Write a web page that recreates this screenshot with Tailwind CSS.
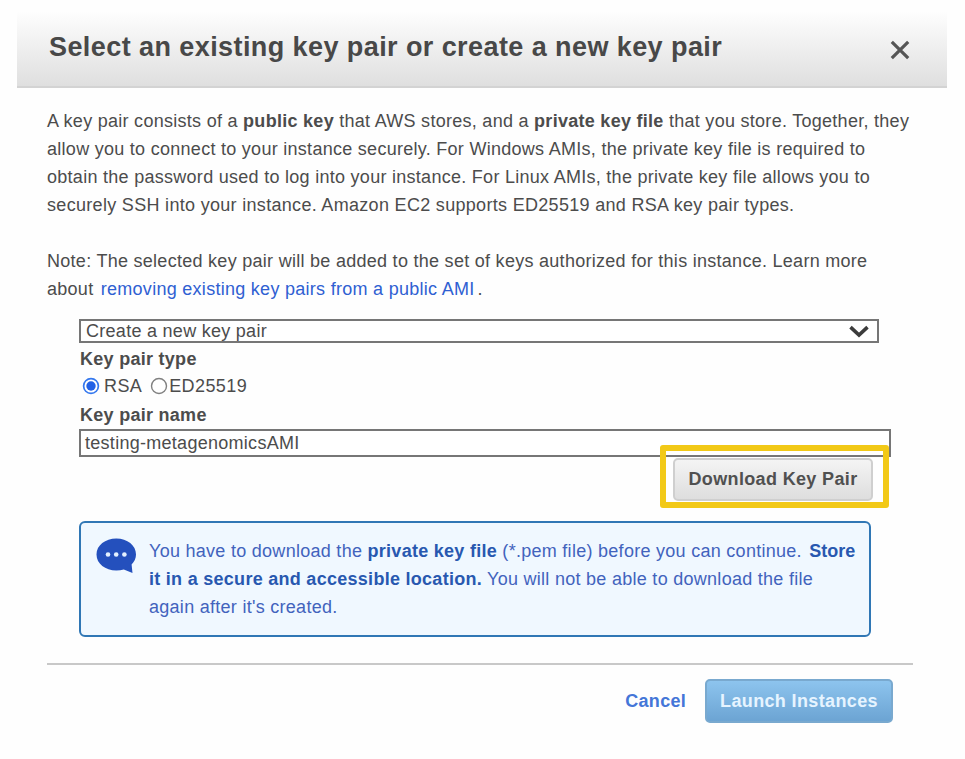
<!DOCTYPE html>
<html lang="en">
<head>
<meta charset="utf-8">
<title>Select an existing key pair or create a new key pair</title>
<script src="https://cdn.jsdelivr.net/npm/@tailwindcss/browser@4"></script>
</head>
<body class="bg-[#fefefe] font-['Liberation_Sans',Arial,sans-serif] text-[18px] leading-[28px] tracking-[0.28px] text-[#4c4c4c] whitespace-nowrap overflow-hidden">
<main class="ml-[17px] w-[930px] pt-[11px]">
  <header class="flex h-[77px] items-center justify-between border-b-2 border-[#d3d3d3] bg-linear-to-b from-[#fefefe] to-[#dfdfdf] pl-8 pr-[37px]">
    <h1 class="pb-[3px] text-[27px] font-bold leading-[32px] tracking-[0.42px] text-[#484848]">Select an existing key pair or create a new key pair</h1>
    <button class="mt-[3px]" aria-label="Close">
      <svg class="block" width="20" height="20" viewBox="0 0 20 20" fill="none" stroke="#555" stroke-width="3.2"><path d="M1.800 1.800 18.200 18.200M18.200 1.800 1.800 18.200"/></svg>
    </button>
  </header>

  <section class="ml-[30px] w-[866px] pt-[19px]">
    <p>A key pair consists of a <b>public key</b> that AWS stores, and a <b>private key file</b> that you store. Together, they<br>allow you to connect to your instance securely. For Windows AMIs, the private key file is required to<br>obtain the password used to log into your instance. For Linux AMIs, the private key file allows you to<br><span class="tracking-[0.31px]">securely SSH into your instance. Amazon EC2 supports ED25519 and RSA key pair types.</span></p>
    <p class="mt-[28px]">Note: The selected key pair will be added to the set of keys authorized for this instance. Learn more<br>about <a class="ml-[2px] text-[#2f60d2]">removing existing key pairs from a public AMI</a><span class="ml-[3px]">.</span></p>

    <form class="ml-8 mt-[16px]">
      <div class="flex h-6 w-[800px] items-center justify-between border-2 border-[#767676] bg-white pl-[5px] pr-[8px]">
        <span class="leading-[20px]">Create a new key pair</span>
        <svg class="block" width="20" height="13" viewBox="0 0 20 13" fill="none" stroke="#3c3c3c" stroke-width="3.6"><path d="M1.5 2.2 10 10 18.500 2.2"/></svg>
      </div>
      <div class="mt-[2px] pl-px font-bold">Key pair type</div>
      <div class="flex h-[28px] items-center pb-[2px]">
        <svg class="ml-[3px] block" width="18" height="18" viewBox="0 0 18 18"><circle cx="9" cy="9" r="7.4" fill="#fff" stroke="#3578ee" stroke-width="1.7"/><circle cx="9" cy="9" r="4.7" fill="#2261e6"/></svg>
        <span class="ml-[4px] tracking-[0.4px]">RSA</span>
        <svg class="ml-[8px] block" width="18" height="18" viewBox="0 0 18 18"><circle cx="9" cy="9" r="7.5" fill="#fff" stroke="#808080" stroke-width="1.4"/></svg>
        <span class="ml-px tracking-[0.4px]">ED25519</span>
      </div>
      <div class="pl-px font-bold">Key pair name</div>
      <div class="flex h-[28px] w-[812px] items-center border-2 border-[#767676] bg-white pl-1">testing-metagenomicsAMI</div>
      <div class="relative ml-[594px] mt-px w-[200px]">
        <div class="flex h-[43px] items-center justify-center rounded-[5px] border-2 border-[#cfcfcf] bg-linear-to-b from-[#f4f4f4] to-[#dedede] pb-px font-bold tracking-[0.35px] text-[#505050]">Download Key Pair</div>
        <div class="absolute -left-[13px] -top-[13px] h-[63px] w-[229px] rounded-[3px] border-[6px] border-[#f2c917]"></div>
      </div>
      <div class="mt-[20px] flex h-[116px] w-[792px] rounded-[6px] border-2 border-[#3077b5] bg-[#f0f8ff] pl-[15px] pt-[14px] text-[#4263bd]">
        <svg class="mt-px block shrink-0" width="41" height="36" viewBox="0 0 41 36"><path d="M20.300.5C9.300.5.5 7.300.5 16.500s8.800 16 19.800 16c2.700 0 5.200-.4 7.500-1.100L36.500 35l-.9-8.500c2.700-2.700 4.400-6.200 4.400-10C40 7.300 31.300.5 20.300.5Z" fill="#2450bd"/><g fill="#e4f1ff"><circle cx="12" cy="16.500" r="2.300"/><circle cx="20.200" cy="16.500" r="2.300"/><circle cx="28.400" cy="16.500" r="2.300"/></g></svg>
        <p class="ml-[12px]">You have to download the <b class="text-[#2858b0]">private key file</b> (*.pem file) before you can continue. <b class="ml-[2px] tracking-normal text-[#2858b0]">Store</b><br><b class="text-[#2858b0]">it in a secure and accessible location.</b> You will not be able to download the file<br>again after it's created.</p>
      </div>
    </form>

    <footer class="mt-[26px] flex items-center justify-end border-t-2 border-[#c8c8c8] pr-5 pt-[14px] font-bold">
      <a class="mr-[19px] text-[#4476d8]">Cancel</a>
      <button class="flex h-11 w-[188px] items-center justify-center rounded-[5px] border-2 border-[#79a9cf] bg-linear-to-b from-[#8dc4ee] to-[#6ca4d3] pb-px tracking-[0.37px] text-[#e6f4ff]">Launch Instances</button>
    </footer>
  </section>
</main>
</body>
</html>
